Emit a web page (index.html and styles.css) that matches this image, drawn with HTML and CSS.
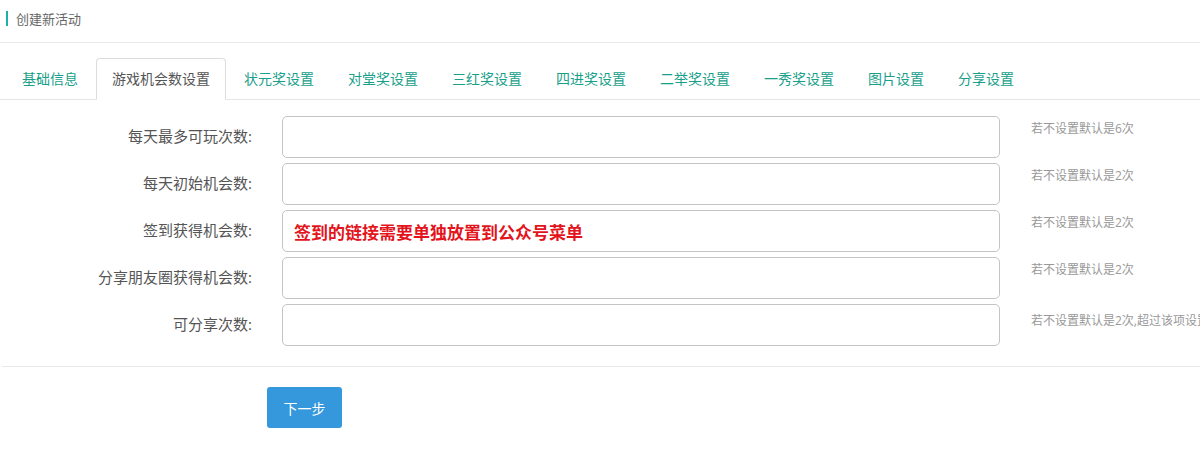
FILE: index.html
```html
<!DOCTYPE html>
<html lang="zh-CN">
<head>
  <meta charset="UTF-8" />
  <meta name="viewport" content="width=device-width, initial-scale=1.0"/>
  <title>创建新活动</title>
  <link rel="stylesheet" href="styles.css">
</head>
<body>
  <div class="page-title"><span class="title-bar"></span>创建新活动</div>

  <ul class="nav-tabs">
    <li><a href="#">基础信息</a></li>
    <li class="active"><a href="#">游戏机会数设置</a></li>
    <li><a href="#">状元奖设置</a></li>
    <li><a href="#">对堂奖设置</a></li>
    <li><a href="#">三红奖设置</a></li>
    <li><a href="#">四进奖设置</a></li>
    <li><a href="#">二举奖设置</a></li>
    <li><a href="#">一秀奖设置</a></li>
    <li><a href="#">图片设置</a></li>
    <li><a href="#">分享设置</a></li>
  </ul>

  <form class="form-grid">
    <label for="maxPlay">每天最多可玩次数:</label>
    <input type="text" id="maxPlay" class="field" />
    <span class="help">若不设置默认是6次</span>

    <label for="initChance">每天初始机会数:</label>
    <input type="text" id="initChance" class="field" />
    <span class="help">若不设置默认是2次</span>

    <label for="signChance">签到获得机会数:</label>
    <input type="text" id="signChance" class="field field-note" value="签到的链接需要单独放置到公众号菜单" />
    <span class="help">若不设置默认是2次</span>

    <label for="shareChance">分享朋友圈获得机会数:</label>
    <input type="text" id="shareChance" class="field" />
    <span class="help">若不设置默认是2次</span>

    <label for="shareTimes">可分享次数:</label>
    <input type="text" id="shareTimes" class="field" />
    <span class="help help-low">若不设置默认是2次,超过该项设置的次数后分享将不再获得游戏机会</span>
  </form>

  <div class="divider"></div>

  <div class="actions">
    <button type="button" class="btn-next">下一步</button>
  </div>
</body>
</html>
```

FILE: styles.css
```css
body {
  margin: 0;
  font-family: "Open Sans", "Noto Sans CJK SC", sans-serif;
  font-size: 14px;
  color: #555;
  background: #fff;
  overflow: hidden;
}
.page-title {
  display: flex;
  align-items: center;
  height: 43px;
  box-sizing: border-box;
  padding: 0 0 5px 6px;
  font-size: 13px;
  color: #666;
  border-bottom: 1px solid #e7eaec;
}
.title-bar {
  display: inline-block;
  width: 2px;
  height: 15px;
  margin-right: 8px;
  background: #1cb0a8;
}
.nav-tabs {
  display: flex;
  list-style: none;
  margin: 15px 0 0;
  padding: 0 0 0 6px;
  border-bottom: 1px solid #e5e6e7;
}
.nav-tabs li {
  margin-bottom: -1px;
}
.nav-tabs a {
  display: block;
  padding: 10px 15px;
  margin-right: 2px;
  line-height: 20px;
  font-size: 14px;
  color: #18a08a;
  text-decoration: none;
  border: 1px solid transparent;
  border-radius: 4px 4px 0 0;
}
.nav-tabs .active a {
  color: #555;
  background: #fff;
  border-color: #ddd #ddd transparent;
}
.form-grid {
  display: grid;
  grid-template-columns: 252px 718px 1fr;
  column-gap: 30px;
  row-gap: 5px;
  padding-top: 16px;
  margin: 0;
}
.form-grid label {
  text-align: right;
  line-height: 41px;
  font-size: 15px;
  color: #555;
}
.field {
  height: 42px;
  box-sizing: border-box;
  padding: 0 11px;
  border: 1px solid #c4c4c4;
  border-radius: 5px;
  font-family: inherit;
  font-size: 14px;
  outline: none;
}
.field-note {
  color: #e3141c;
  font-weight: bold;
  font-size: 17px;
}
.help {
  margin-top: 4px;
  margin-left: 1px;
  line-height: 18px;
  font-size: 12px;
  color: #999;
  white-space: nowrap;
}
.help-low {
  margin-top: 8px;
}
.divider {
  margin: 20px 0 0 2px;
  border-top: 1px solid #e7eaec;
}
.actions {
  padding: 20px 0 0 267px;
}
.btn-next {
  width: 75px;
  height: 41px;
  border: none;
  border-radius: 3px;
  background: #3598dc;
  color: #fff;
  font-family: inherit;
  font-size: 14px;
  cursor: pointer;
}
```
